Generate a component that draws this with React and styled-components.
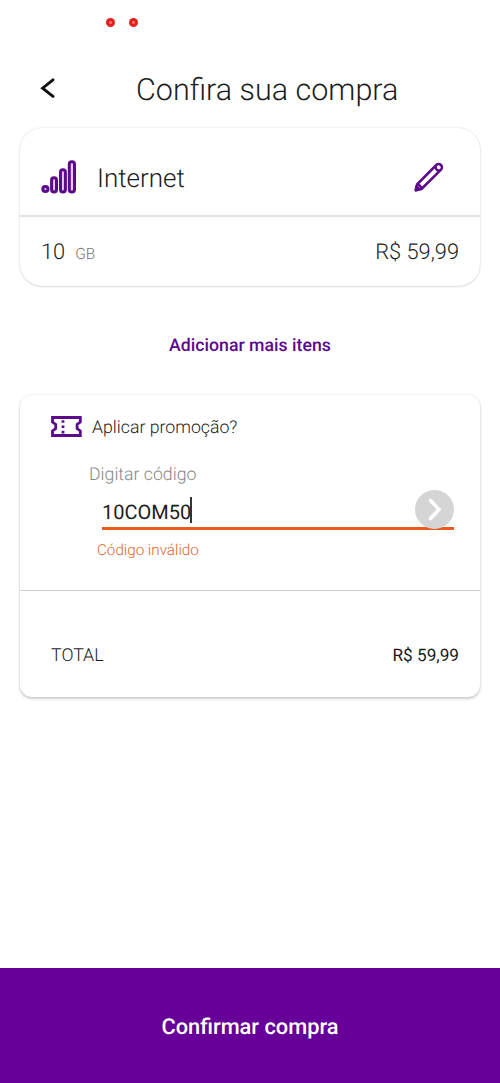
import React from "react";
import styled, { createGlobalStyle } from "styled-components";

const App = () => {
  return (
    <>
      <GlobalStyle />
      <Screen>
        <StatusBar>
          <Dot />
          <Dot />
        </StatusBar>

        <Header>
          <BackButton type="button" aria-label="Voltar">
            <svg width="16" height="20" viewBox="0 0 16 20" fill="none">
              <path
                d="M13 1.8 2.600 10.200l10.400 8.200"
                stroke="#111"
                strokeWidth="2.9"
                strokeLinecap="round"
              />
            </svg>
          </BackButton>
          <Title>Confira sua compra</Title>
        </Header>

        <ProductCard>
          <ProductHeader>
            <SignalIcon />
            <ProductName>Internet</ProductName>
            <PencilIcon />
          </ProductHeader>
          <ProductRow>
            <Amount>10</Amount>
            <Unit>GB</Unit>
            <Price>R$ 59,99</Price>
          </ProductRow>
        </ProductCard>

        <AddMore type="button">Adicionar mais itens</AddMore>

        <PromoCard>
          <PromoTop>
            <PromoHeader>
              <TicketIcon />
              <PromoTitle>Aplicar promoção?</PromoTitle>
            </PromoHeader>
            <Label>Digitar código</Label>
            <Field>
              <Code>10COM50</Code>
              <Caret />
              <ApplyButton type="button" aria-label="Aplicar">
                <svg width="14" height="23" viewBox="0 0 14 23" fill="none">
                  <path
                    d="M2.6 2.5 11 11.5l-8.4 9"
                    stroke="#fff"
                    strokeWidth="3.6"
                    strokeLinecap="round"
                    strokeLinejoin="round"
                  />
                </svg>
              </ApplyButton>
            </Field>
            <ErrorText>Código inválido</ErrorText>
          </PromoTop>
          <TotalRow>
            <TotalLabel>TOTAL</TotalLabel>
            <TotalValue>R$ 59,99</TotalValue>
          </TotalRow>
        </PromoCard>

        <ConfirmButton type="button">Confirmar compra</ConfirmButton>
      </Screen>
    </>
  );
};

const SignalIcon = () => (
  <svg
    width="36"
    height="34"
    viewBox="0 0 36 34"
    fill="#ecc8fa"
    stroke="#5c0a8c"
    strokeWidth="3"
  >
    <circle cx="4.4" cy="29" r="2.6" />
    <rect x="10.6" y="17.8" width="4.9" height="14.2" rx="2.4" />
    <rect x="19.5" y="9.8" width="4.9" height="22.2" rx="2.4" />
    <rect x="28.3" y="1.8" width="5.2" height="30.2" rx="2.5" />
  </svg>
);

const PencilIcon = () => (
  <svg
    width="30"
    height="30"
    viewBox="0 0 30 30"
    fill="none"
    stroke="#5c0a8c"
    strokeWidth="2.5"
    strokeLinejoin="round"
  >
    <path d="M1.8 28.2 3 22.500 22.300 3a3.300 3.300 0 0 1 4.700 4.700L7.500 27Z" />
    <path d="M21.700 4.200c-.6 2.700 1.500 4.800 4.200 4.200M3.200 22.600c2.200.3 3.900 2 4.200 4.200" />
    <path d="M1.8 28.2 2.600 24.600 5.400 27.400Z" fill="#5c0a8c" />
  </svg>
);

const TicketIcon = () => (
  <svg
    width="31"
    height="21"
    viewBox="0 0 31 21"
    fill="none"
    stroke="#5c0a8c"
    strokeWidth="2.8"
  >
    <path d="M1.5 1.5h27.800v4.500l-3.200 2.500v4l3.200 2.500v4.500H1.500v-4.500l3.200-2.500v-4L1.500 6Z" />
    <path d="M12 4.200v13.500" strokeDasharray="2.600 2.700" />
  </svg>
);

export default App;

//styled-components

const GlobalStyle = createGlobalStyle`
  * {
    box-sizing: border-box;
  }
  body {
    margin: 0;
    background-color: #fff;
    font-family: Roboto, "Liberation Sans", sans-serif;
    text-rendering: geometricPrecision;
  }
  button {
    padding: 0;
    border: none;
    background: none;
    font-family: inherit;
    text-rendering: inherit;
  }
`;

const Screen = styled.main`
  display: flex;
  flex-direction: column;
  width: 100%;
  height: 1083px;
  color: #1c1c1c;
`;

const StatusBar = styled.div`
  display: flex;
  align-items: center;
  gap: 14px;
  height: 44px;
  padding-left: 106px;
`;

const Dot = styled.span`
  width: 9px;
  height: 9px;
  border-radius: 50%;
  background: radial-gradient(circle, #f5706a 0 1px, #e4201d 2px);
`;

const Header = styled.header`
  display: flex;
  align-items: center;
  height: 84px;
  padding: 9px 0 0 40px;
`;

const BackButton = styled.button`
  display: flex;
  width: 96px;
  margin-top: -5px;
`;

const Title = styled.h1`
  margin: 0;
  font-size: 30.5px;
  font-weight: 300;
  line-height: 36px;
`;

const ProductCard = styled.section`
  height: 158px;
  margin: 0 20px;
  border-radius: 22px;
  background-color: #fff;
  box-shadow: 0 0 2px rgba(0, 0, 0, 0.16), 0 1px 2px rgba(0, 0, 0, 0.1);
`;

const ProductHeader = styled.div`
  display: flex;
  align-items: center;
  height: 89px;
  padding: 11px 36px 0 21px;
  border-bottom: 2px solid #e2e2e2;
`;

const ProductName = styled.h2`
  flex: 1;
  margin: 4px 0 0 20px;
  font-size: 26px;
  font-weight: 300;
`;

const ProductRow = styled.div`
  display: flex;
  align-items: baseline;
  padding: 22px 21px 0 21px;
  font-size: 21.8px;
  font-weight: 300;
  line-height: 28px;
`;

const Amount = styled.span`
  color: #1c1c1c;
`;

const Unit = styled.span`
  margin-left: 10px;
  color: #777;
  font-size: 15.5px;
`;

const Price = styled.span`
  margin-left: auto;
`;

const AddMore = styled.button`
  align-self: center;
  height: 28px;
  margin-top: 46px;
  color: #5c0a8c;
  font-size: 17.7px;
  font-weight: 500;
`;

const PromoCard = styled.section`
  height: 302px;
  margin: 35px 20px 0;
  border-radius: 12px;
  background-color: #fff;
  box-shadow: 0 0 2px rgba(0, 0, 0, 0.14), 0 2px 3px rgba(0, 0, 0, 0.18);
`;

const PromoTop = styled.div`
  height: 196px;
  padding: 20px 26px 0 31px;
  border-bottom: 1px solid #d2d2d2;
`;

const PromoHeader = styled.div`
  display: flex;
  align-items: center;
  height: 22px;
`;

const PromoTitle = styled.span`
  margin: 3px 0 0 10px;
  font-size: 17.7px;
  font-weight: 300;
`;

const Label = styled.div`
  margin: 27px 0 0 38px;
  color: #888;
  font-size: 17.7px;
  font-weight: 300;
  line-height: 22px;
`;

const Field = styled.div`
  display: flex;
  align-items: center;
  height: 43px;
  margin: 1px 0 0 51px;
  border-bottom: 3px solid #ea5a1f;
`;

const Code = styled.span`
  margin-top: 9px;
  font-size: 20px;
`;

const Caret = styled.span`
  width: 2px;
  height: 26px;
  margin: 6px 0 0 -1px;
  background-color: #333;
`;

const ApplyButton = styled.button`
  display: flex;
  align-items: center;
  justify-content: center;
  width: 39px;
  height: 39px;
  margin: 5px 0 0 auto;
  border-radius: 50%;
  background-color: #d5d5d5;
`;

const ErrorText = styled.div`
  margin: 9px 0 0 46px;
  color: #e0662f;
  font-size: 15.2px;
  font-weight: 300;
  line-height: 22px;
`;

const TotalRow = styled.div`
  display: flex;
  align-items: center;
  justify-content: space-between;
  height: 106px;
  padding: 22px 21px 0 31px;
  font-size: 17.8px;
`;

const TotalLabel = styled.span`
  font-weight: 300;
`;

const TotalValue = styled.span`
  margin-top: 2px;
  font-size: 17.2px;
`;

const ConfirmButton = styled.button`
  height: 115px;
  margin-top: auto;
  padding-top: 4px;
  background-color: #660099;
  color: #fff;
  font-size: 21.8px;
  font-weight: 500;
`;
